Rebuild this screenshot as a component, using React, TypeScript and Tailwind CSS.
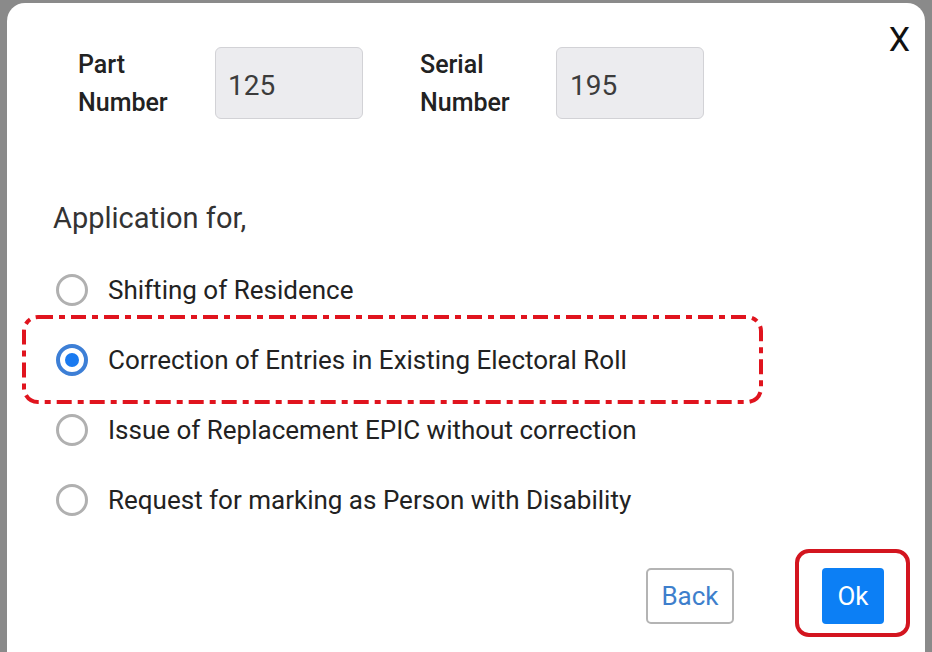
import React from "react";

function Radio({ checked }: { checked?: boolean }) {
  if (checked) {
    return (
      <div className="w-[32px] h-[32px] rounded-full border-[4px] border-[#3d7fd6] bg-white flex items-center justify-center shrink-0">
        <div className="w-[14px] h-[14px] rounded-full bg-[#1a7af0]" />
      </div>
    );
  }
  return <div className="w-[32px] h-[32px] rounded-full border-[3px] border-[#b0b0b0] bg-white shrink-0" />;
}

export default function App() {
  const options = [
    "Shifting of Residence",
    "Correction of Entries in Existing Electoral Roll",
    "Issue of Replacement EPIC without correction",
    "Request for marking as Person with Disability",
  ];
  return (
    <div
      className="w-[932px] h-[652px] overflow-hidden bg-[#8a8a8a] flex pl-[7px] pr-[7px] pt-[3px]"
      style={{ fontFamily: "Roboto, 'Noto Sans', sans-serif" }}
    >
      <div className="relative flex-1 h-[680px] bg-white rounded-t-[18px] pt-[42px] pl-[46px] pr-[41px]">
        <div className="absolute right-[15px] top-[16px] text-[34px] leading-[40px] text-[#111] font-normal">X</div>

        {/* Top row */}
        <div className="flex items-start pl-[25px]">
          <div className="w-[137px] mt-[1px] text-[25px] leading-[38px] font-medium text-[#222]">
            Part
            <br />
            Number
          </div>
          <div className="w-[148px] h-[72px] mt-[2px] bg-[#ececef] border border-[#d2d2d6] rounded-[6px] flex items-center pl-[12px] pt-[6px] text-[28px] text-[#3c3c3c]">
            125
          </div>
          <div className="w-[136px] ml-[57px] mt-[1px] text-[25px] leading-[38px] font-medium text-[#222]">
            Serial
            <br />
            Number
          </div>
          <div className="w-[148px] h-[72px] mt-[2px] bg-[#ececef] border border-[#d2d2d6] rounded-[6px] flex items-center pl-[13px] pt-[6px] text-[28px] text-[#3c3c3c]">
            195
          </div>
        </div>

        <div className="mt-[79px] text-[29px] leading-[34px] text-[#333]">Application for,</div>

        <div className="relative mt-[20px]">
          <svg
            className="absolute left-[-31px] top-[60px]"
            width="741"
            height="89"
            viewBox="0 0 741 89"
          >
            <rect
              x="2"
              y="2"
              width="737"
              height="85"
              rx="14"
              fill="none"
              stroke="#e0141e"
              strokeWidth="4"
              strokeDasharray="15 6 6 6"
            />
          </svg>
          {options.map((o, i) => (
            <div key={o} className="relative h-[70px] flex items-center pl-[3px] gap-[20px]">
              <Radio checked={i === 1} />
              <span className="text-[26px] text-[#222]">{o}</span>
            </div>
          ))}
        </div>

        <div className="flex justify-end mt-[33px] gap-[88px]">
          <div className="w-[88px] h-[56px] border-[2px] border-[#b4b4b4] rounded-[5px] flex items-center justify-center text-[26px] text-[#3e7fcc]">
            Back
          </div>
          <div className="relative w-[62px] h-[56px] bg-[#0c7ff5] rounded-[4px] flex items-center justify-center text-[26px] text-white">
            Ok
            <div className="absolute left-[-27px] top-[-19px] w-[115px] h-[88px] border-[4px] border-[#d3151f] rounded-[14px]" />
          </div>
        </div>
      </div>
    </div>
  );
}
